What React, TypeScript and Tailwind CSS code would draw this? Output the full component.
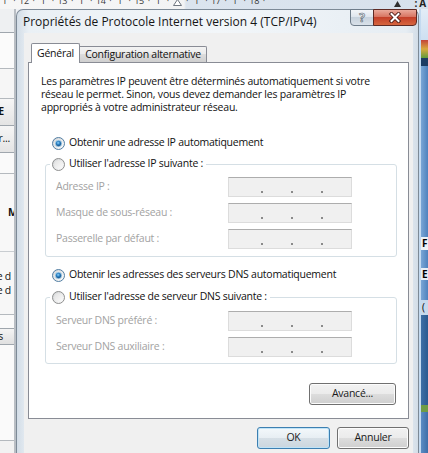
import React from "react";

const rulerMarks = [
  "ı", "·", "12", "·", "ı", "·", "13", "·", "ı", "·", "14", "·", "ı", "·",
  "15", "·", "ı", "·", "tri", "·", "ı", "·", "17", "·", "ı", "·", "18", "·",
];

function Ruler() {
  return (
    <div className="h-[9px] shrink-0 flex overflow-hidden bg-[linear-gradient(90deg,#f6f6f6_0,#f2f3f4_184px,#dbe4ee_186px,#d7e1ec_100%)]">
      <div className="flex w-[269px] shrink-0">
        {rulerMarks.map((m, i) => (
          <div key={i} className="w-[9.6px] shrink-0 flex justify-center">
            {m === "tri" ? (
              <svg width="9" height="7" viewBox="0 0 9 7" className="-mt-[1px]">
                <path d="M4.5 0.5 L8.5 6.5 L0.5 6.5 Z" fill="#fff" stroke="#6f7780" />
              </svg>
            ) : (
              <span className="text-[9px] leading-[12px] -mt-[5px] text-[#3b3b3b]">{m}</span>
            )}
          </div>
        ))}
      </div>
      <div className="flex-1" />
      <svg width="7" height="6" viewBox="0 0 7 6" className="mt-[1px] mr-[13px]">
        <path d="M3.5 0 L7 6 L0 6 Z" fill="#2f2f2f" />
      </svg>
      <span className="text-[10px] leading-[12px] -mt-[3px] font-bold text-[#222] mr-[2px]">: A</span>
    </div>
  );
}

function LeftStrip() {
  return (
    <div className="w-[16px] shrink-0 flex flex-col overflow-hidden border-r-2 border-[#b9bec4] bg-[#f7f7f8] text-[10.5px] text-[#111]">
      <div className="h-[24px] shrink-0 bg-[#eef0f2] border-b border-[#9fa6ad]" />
      <div className="h-[36px] shrink-0 bg-[#fbfbfb] border-b border-[#b4b9be]" />
      <div className="h-[30px] shrink-0 bg-[#f6f6f6] border-b border-[#b4b9be]" />
      <div className="h-[27px] shrink-0 bg-[linear-gradient(#f6f6f6,#e4e4e4)] border-b border-[#9fa6ad] flex items-center justify-end pr-[10px] font-bold">
        E
      </div>
      <div className="h-[27px] shrink-0 bg-[linear-gradient(#f6f6f6,#e4e4e4)] border-b border-[#9fa6ad] flex items-center justify-end pr-[4px]">
        r...
      </div>
      <div className="h-[21px] shrink-0 bg-[#fafafa] border-b border-[#b4b9be]" />
      <div className="h-[77px] shrink-0 bg-[#f8f8f8] flex items-center pl-[8px] font-bold whitespace-nowrap">
        Mi
      </div>
      <div className="h-[63px] shrink-0 bg-[#f7f7f7] border-t border-[#c9cdd1] flex flex-col justify-center items-end pr-[3px] leading-[14px] whitespace-nowrap">
        <span>e d</span>
        <span>e d</span>
      </div>
      <div className="h-[14px] shrink-0 bg-[#fafafa] border-t border-[#b4b9be]" />
      <div className="h-[17px] shrink-0 bg-[linear-gradient(#f4f4f4,#e0e0e0)] border-y border-[#9fa6ad] flex items-center justify-end pr-[11px]">
        s
      </div>
      <div className="h-[96px] shrink-0 bg-[#fafafa] border-b border-[#b4b9be]" />
      <div className="flex-1 bg-[#f2f2f2]" />
    </div>
  );
}

function RightStrip() {
  return (
    <div className="w-[9px] shrink-0 flex flex-col overflow-hidden border-l-2 border-[#c4daf0] text-[10px] font-bold text-black">
      <div className="h-[31px] shrink-0 bg-[linear-gradient(#e3edf7,#cddff1)]" />
      <div className="h-[18px] shrink-0 bg-[linear-gradient(#c4433a,#d9a93e_50%,#5f9a3e)]" />
      <div className="h-[8px] shrink-0 bg-[#1d3c63]" />
      <div className="h-[171px] shrink-0 bg-[linear-gradient(90deg,#7aa6d6,#4f82bd)]" />
      <div className="h-[13px] shrink-0 bg-[#eef2f6] leading-[13px] pl-[1px]">F</div>
      <div className="h-[18px] shrink-0 bg-[linear-gradient(90deg,#7aa6d6,#4f82bd)]" />
      <div className="h-[12px] shrink-0 bg-[#e8eef5] leading-[12px] pl-[1px]">E</div>
      <div className="h-[20px] shrink-0 bg-[linear-gradient(90deg,#7aa6d6,#4f82bd)]" />
      <div className="h-[15px] shrink-0 bg-[#c7d9ec] leading-[15px] pl-[1px] font-normal">(</div>
      <div className="h-[90px] shrink-0 bg-[linear-gradient(90deg,#3f6fa6,#2b5a90)]" />
      <div className="h-[7px] shrink-0 bg-[#6f9c45]" />
      <div className="flex-1 bg-[linear-gradient(90deg,#5b8cc4,#3e6ea8)]" />
    </div>
  );
}

function Radio({ checked = false }: { checked?: boolean }) {
  return (
    <svg width="13" height="13" viewBox="0 0 13 13" className="shrink-0 block">
      <defs>
        <linearGradient id="rOuter" x1="0" y1="0" x2="1" y2="1">
          <stop offset="0" stopColor="#cfd1d3" />
          <stop offset="1" stopColor="#ffffff" />
        </linearGradient>
        <linearGradient id="rInner" x1="0" y1="0" x2="1" y2="1">
          <stop offset="0" stopColor="#e1e1e1" />
          <stop offset="1" stopColor="#fbfbfb" />
        </linearGradient>
        <radialGradient id="rDot" cx="0.45" cy="0.4" r="0.6">
          <stop offset="0" stopColor="#8fd3fb" />
          <stop offset="0.45" stopColor="#2a7fc2" />
          <stop offset="1" stopColor="#0d3e6e" />
        </radialGradient>
      </defs>
      <circle cx="6.5" cy="6.5" r="6" fill="url(#rOuter)" stroke={checked ? "#527ea3" : "#8e8f8f"} />
      <circle cx="6.5" cy="6.5" r="4.3" fill="url(#rInner)" />
      {checked && <circle cx="6.5" cy="6.5" r="3.2" fill="url(#rDot)" stroke="#b9e1f8" strokeWidth="0.8" />}
    </svg>
  );
}

function IpField() {
  return (
    <div className="w-[124px] h-[20px] shrink-0 bg-[#f0f0f0] border border-[#dcdcdc] border-t-[#adadad] flex items-start pt-[13px] pl-[32px] gap-[28px]">
      <span className="w-[2px] h-[2px] bg-[#8a8a8a]" />
      <span className="w-[2px] h-[2px] bg-[#8a8a8a]" />
      <span className="w-[2px] h-[2px] bg-[#8a8a8a]" />
    </div>
  );
}

function FieldRow({ label }: { label: string }) {
  return (
    <div className="flex items-center h-[20px]">
      <span className="w-[172px] shrink-0 text-[#a2a2a2]">{label}</span>
      <IpField />
    </div>
  );
}

function Button({ label, className = "", primary = false }: { label: string; className?: string; primary?: boolean }) {
  return (
    <div
      className={
        "h-[22px] rounded-[3px] border flex items-center justify-center shrink-0 text-[#1a1a1a] " +
        (primary
          ? "border-[#3c7fb1] bg-[linear-gradient(#f3f8fb,#e7eef3_50%,#d6dfe6_50%,#cbd6de)] shadow-[inset_0_0_0_1px_#bfe3f7] "
          : "border-[#707070] bg-[linear-gradient(#f2f2f2,#ebebeb_50%,#dddddd_50%,#cfcfcf)] shadow-[inset_0_0_0_1px_#fcfcfc] ") +
        className
      }
    >
      {label}
    </div>
  );
}

function Dialog() {
  return (
    <div className="w-[403px] shrink-0 flex flex-col border border-b-0 border-[#7d8a97] rounded-t-[7px] bg-[linear-gradient(90deg,#d3dde7,#eaf0f5_3%,#f2f6f9_50%,#e6edf3_97%,#d3dde7)]">
      <div className="h-[23px] shrink-0 flex items-start justify-between pl-[6px] pr-[1px]">
        <span className="mt-[4px] text-[12px] leading-[15px] tracking-normal text-[#161616] whitespace-nowrap">
          Propriétés de Protocole Internet version 4 (TCP/IPv4)
        </span>
        <div className="flex -mt-px">
          <div className="w-[24px] h-[17px] rounded-bl-[4px] border border-[#6e7c8a] bg-[linear-gradient(#f2f5f8,#dfe6ee_45%,#c7d2dd_50%,#d9e1e9)] flex items-center justify-center text-[12px] font-bold leading-none text-[#eef2f6] [-webkit-text-stroke:0.6px_#4f5b66]">
            ?
          </div>
          <div className="w-[44px] h-[17px] -ml-px rounded-br-[4px] border border-[#5e2a24] bg-[linear-gradient(#eaa99b,#d87562_45%,#c4402a_50%,#d6663f)] flex items-center justify-center">
            <svg width="14" height="11" viewBox="0 0 14 11">
              <path d="M3.5 2 L10.5 9 M10.5 2 L3.5 9" stroke="#4a1a14" strokeWidth="3.8" strokeLinecap="square" />
              <path d="M3.5 2 L10.5 9 M10.5 2 L3.5 9" stroke="#ffffff" strokeWidth="2" strokeLinecap="square" />
            </svg>
          </div>
        </div>
      </div>

      <div className="flex-1 ml-[7px] mr-[5px] bg-[#f0f0f0] flex flex-col">
        <div className="h-[29px] shrink-0 flex items-end pl-[7px]">
          <div className="relative z-10 -mb-px w-[49px] h-[20px] border border-b-0 border-[#898c95] rounded-t-[2px] bg-white flex items-center justify-center">
            Général
          </div>
          <div className="w-[127px] h-[16px] border border-l-0 border-b-0 border-[#898c95] rounded-tr-[2px] bg-[linear-gradient(#f3f3f3,#ebebeb_50%,#dddddd_50%,#cfcfcf)] flex items-center justify-center">
            Configuration alternative
          </div>
        </div>

        <div className="mx-[4px] h-[357px] shrink-0 border border-[#898c95] bg-white flex flex-col">
          <p className="pl-[12px] pt-[12px] leading-[13px] tracking-[-0.2px] whitespace-nowrap">
            Les paramètres IP peuvent être déterminés automatiquement si votre
            <br />
            réseau le permet. Sinon, vous devez demander les paramètres IP
            <br />
            appropriés à votre administrateur réseau.
          </p>

          <div className="mt-[21px] h-[16px] pl-[23px] flex items-center gap-[4px]">
            <Radio checked />
            <span>Obtenir une adresse IP automatiquement</span>
          </div>

          <fieldset className="mt-[5px] ml-[16px] w-[352px] border border-[#d5dfe5] rounded-[3px] pl-[10px] pb-[7px]">
            <legend className="-ml-[6px] px-[2px] h-[16px] flex items-center gap-[4px]">
              <Radio />
              <span className="pr-[1px]">Utiliser l'adresse IP suivante :</span>
            </legend>
            <div className="mt-[5px] flex flex-col gap-[6px]">
              <FieldRow label="Adresse IP :" />
              <FieldRow label="Masque de sous-réseau :" />
              <FieldRow label="Passerelle par défaut :" />
            </div>
          </fieldset>

          <div className="mt-[10px] h-[16px] pl-[23px] flex items-center gap-[4px]">
            <Radio checked />
            <span>Obtenir les adresses des serveurs DNS automatiquement</span>
          </div>

          <fieldset className="mt-[6px] ml-[16px] w-[352px] border border-[#d5dfe5] rounded-[3px] pl-[10px] pb-[6px]">
            <legend className="-ml-[6px] px-[2px] h-[16px] flex items-center gap-[4px]">
              <Radio />
              <span className="pr-[1px]">Utiliser l'adresse de serveur DNS suivante :</span>
            </legend>
            <div className="mt-[6px] flex flex-col gap-[6px]">
              <FieldRow label="Serveur DNS préféré :" />
              <FieldRow label="Serveur DNS auxiliaire :" />
            </div>
          </fieldset>

          <div className="mt-[19px] flex justify-end pr-[12px]">
            <Button label="Avancé..." className="w-[87px] h-[21px]" />
          </div>
        </div>

        <div className="mt-[8px] flex justify-end gap-[7px] pr-[4px]">
          <Button label="OK" primary className="w-[73px]" />
          <Button label="Annuler" className="w-[72px]" />
        </div>
      </div>
    </div>
  );
}

export default function App() {
  return (
    <div className="w-[428px] h-[453px] overflow-hidden flex flex-col bg-[#eef1f5] font-['Open_Sans',sans-serif] text-[10.5px] tracking-[-0.25px] text-[#111]">
      <Ruler />
      <div className="flex h-[444px] shrink-0">
        <LeftStrip />
        <Dialog />
        <RightStrip />
      </div>
    </div>
  );
}
